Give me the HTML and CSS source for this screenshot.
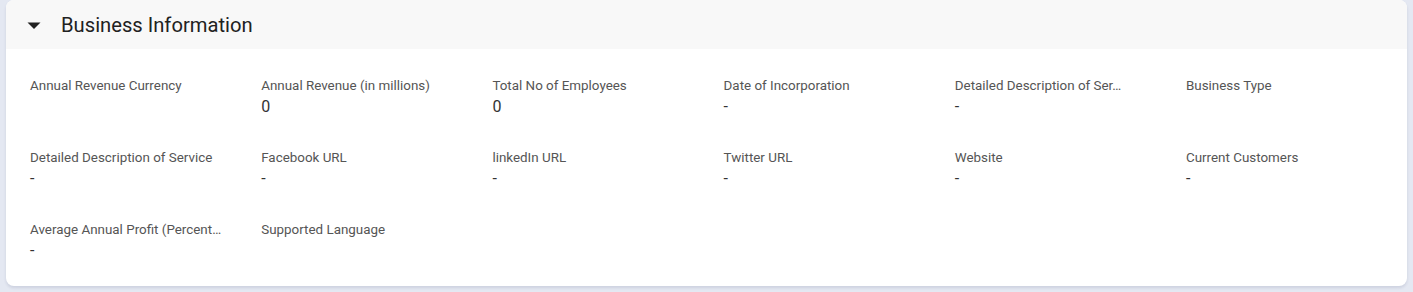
FILE: index.html
```html
<!DOCTYPE html>
<html lang="en">
<head>
  <meta charset="UTF-8">
  <title>Business Information</title>
  <link rel="stylesheet" href="styles.css">
</head>
<body>
  <div class="panel">
    <div class="panel-header">
      <svg class="caret" width="14" height="8" viewBox="0 0 14 8"><path d="M0.5 0.5h13L7 7z" fill="#212121"/></svg>
      <span class="panel-title">Business Information</span>
    </div>
    <div class="panel-body">
      <div class="field"><div class="field-label">Annual Revenue Currency</div><div class="field-value"></div></div>
      <div class="field"><div class="field-label">Annual Revenue (in millions)</div><div class="field-value">0</div></div>
      <div class="field"><div class="field-label">Total No of Employees</div><div class="field-value">0</div></div>
      <div class="field"><div class="field-label">Date of Incorporation</div><div class="field-value">-</div></div>
      <div class="field"><div class="field-label" title="Detailed Description of Service">Detailed Description of Ser…</div><div class="field-value">-</div></div>
      <div class="field"><div class="field-label">Business Type</div><div class="field-value"></div></div>

      <div class="field"><div class="field-label">Detailed Description of Service</div><div class="field-value">-</div></div>
      <div class="field"><div class="field-label">Facebook URL</div><div class="field-value">-</div></div>
      <div class="field"><div class="field-label">linkedIn URL</div><div class="field-value">-</div></div>
      <div class="field"><div class="field-label">Twitter URL</div><div class="field-value">-</div></div>
      <div class="field"><div class="field-label">Website</div><div class="field-value">-</div></div>
      <div class="field"><div class="field-label">Current Customers</div><div class="field-value">-</div></div>

      <div class="field"><div class="field-label" title="Average Annual Profit (Percentage)">Average Annual Profit (Percent…</div><div class="field-value">-</div></div>
      <div class="field"><div class="field-label">Supported Language</div><div class="field-value"></div></div>
    </div>
  </div>
</body>
</html>
```

FILE: styles.css
```css
html, body {
  margin: 0;
  padding: 0;
  font-family: Roboto, "Liberation Sans", sans-serif;
}
body {
  background: #e4e8f2;
  padding: 0 6px 6px 6px;
}
.panel {
  background: #fff;
  border-radius: 8px;
  box-shadow: 0 2px 3px rgba(40, 50, 90, 0.12);
  overflow: hidden;
}
.panel-header {
  height: 49px;
  background: #f8f8f8;
  display: flex;
  align-items: center;
  padding-left: 21px;
}
.caret {
  display: block;
  margin-right: 20px;
  margin-top: 2px;
}
.panel-title {
  font-size: 20.2px;
  color: #212121;
}
.panel-body {
  display: grid;
  grid-template-columns: repeat(6, 231.2px);
  row-gap: 31px;
  padding: 27px 24px 25px 24px;
}
.field-label {
  font-size: 13.4px;
  line-height: 20px;
  color: #555;
  white-space: nowrap;
}
.field-value {
  font-size: 16px;
  line-height: 21px;
  height: 21px;
  color: #333;
}
```
